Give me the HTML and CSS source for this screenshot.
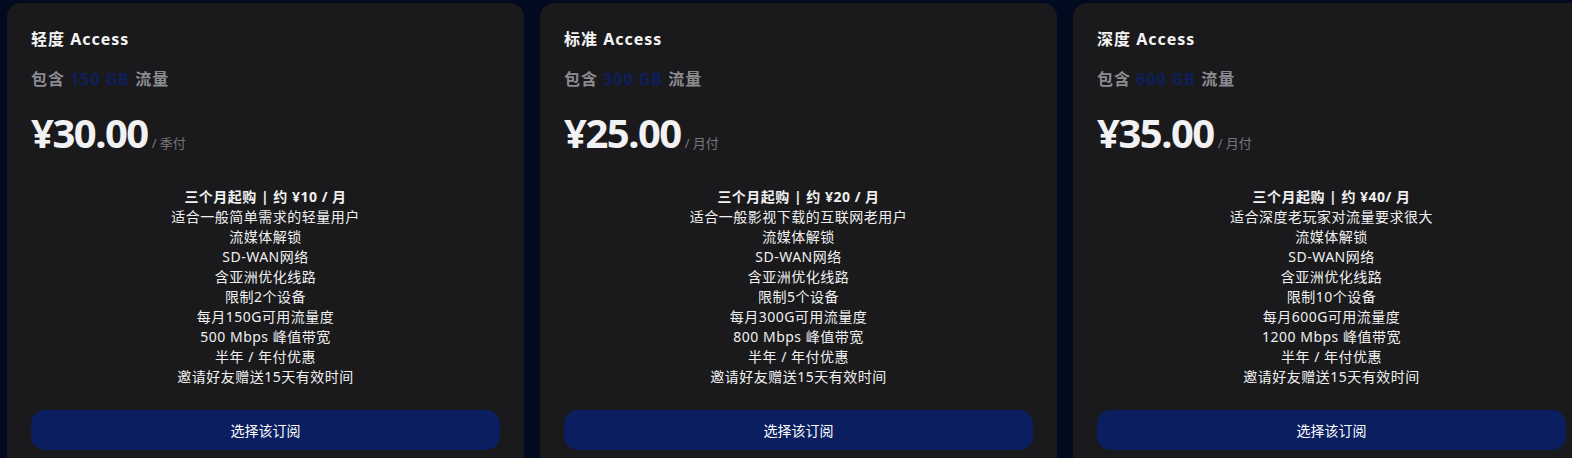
FILE: index.html
```html
<!DOCTYPE html>
<html lang="zh-CN">
<head>
    <meta charset="UTF-8">
    <meta name="viewport" content="width=device-width, initial-scale=1.0">
    <title>订阅套餐</title>
    <link rel="stylesheet" href="styles.css">
</head>
<body>
    <div class="plans">
        <div class="plan">
            <h2 class="plan-title">轻度 Access</h2>
            <p class="plan-traffic">包含 <span class="traffic-amount">150 GB</span> 流量</p>
            <div class="plan-price"><span class="price">¥30.00</span><span class="period">/ 季付</span></div>
            <ul class="features">
                <li class="lead">三个月起购 | 约 ¥10 / 月</li>
                <li>适合一般简单需求的轻量用户</li>
                <li>流媒体解锁</li>
                <li>SD-WAN网络</li>
                <li>含亚洲优化线路</li>
                <li>限制2个设备</li>
                <li>每月150G可用流量度</li>
                <li>500 Mbps 峰值带宽</li>
                <li>半年 / 年付优惠</li>
                <li>邀请好友赠送15天有效时间</li>
            </ul>
            <button class="select-btn">选择该订阅</button>
        </div>

        <div class="plan">
            <h2 class="plan-title">标准 Access</h2>
            <p class="plan-traffic">包含 <span class="traffic-amount">300 GB</span> 流量</p>
            <div class="plan-price"><span class="price">¥25.00</span><span class="period">/ 月付</span></div>
            <ul class="features">
                <li class="lead">三个月起购 | 约 ¥20 / 月</li>
                <li>适合一般影视下载的互联网老用户</li>
                <li>流媒体解锁</li>
                <li>SD-WAN网络</li>
                <li>含亚洲优化线路</li>
                <li>限制5个设备</li>
                <li>每月300G可用流量度</li>
                <li>800 Mbps 峰值带宽</li>
                <li>半年 / 年付优惠</li>
                <li>邀请好友赠送15天有效时间</li>
            </ul>
            <button class="select-btn">选择该订阅</button>
        </div>

        <div class="plan">
            <h2 class="plan-title">深度 Access</h2>
            <p class="plan-traffic">包含 <span class="traffic-amount">600 GB</span> 流量</p>
            <div class="plan-price"><span class="price">¥35.00</span><span class="period">/ 月付</span></div>
            <ul class="features">
                <li class="lead">三个月起购 | 约 ¥40/ 月</li>
                <li>适合深度老玩家对流量要求很大</li>
                <li>流媒体解锁</li>
                <li>SD-WAN网络</li>
                <li>含亚洲优化线路</li>
                <li>限制10个设备</li>
                <li>每月600G可用流量度</li>
                <li>1200 Mbps 峰值带宽</li>
                <li>半年 / 年付优惠</li>
                <li>邀请好友赠送15天有效时间</li>
            </ul>
            <button class="select-btn">选择该订阅</button>
        </div>
    </div>
</body>
</html>
```

FILE: styles.css
```css
body {
    margin: 0;
    padding: 0;
    background-color: #010a1f;
    font-family: 'Noto Sans', 'Noto Sans CJK SC', sans-serif;
    color: #f2f2f2;
    overflow: hidden;
}

.plans {
    display: flex;
    gap: 16px;
    padding: 3px 0 0 7px;
    width: 1700px;
}

.plan {
    flex: 0 0 517px;
    box-sizing: border-box;
    background-color: #1a1a1c;
    border-radius: 14px;
    padding: 24px 24px 30px;
}

.plan-title {
    margin: 0;
    font-size: 16px;
    line-height: 24px;
    font-weight: 700;
    letter-spacing: 1px;
    color: #f4f4f4;
}

.plan-traffic {
    margin: 16px 0 0;
    font-size: 16px;
    line-height: 24px;
    font-weight: 700;
    letter-spacing: 1px;
    color: #8c8c90;
}

.traffic-amount {
    color: #0d1f5e;
}

.plan-price {
    margin-top: 18px;
    display: flex;
    align-items: baseline;
    gap: 4px;
    height: 48px;
}

.price {
    font-size: 40px;
    line-height: 48px;
    font-weight: 700;
    color: #f2f2f4;
    letter-spacing: -1.5px;
}

.period {
    font-size: 13px;
    color: #77777b;
}

.features {
    list-style: none;
    margin: 30px 0 0;
    padding: 0;
    text-align: center;
    font-size: 14px;
    line-height: 20px;
    letter-spacing: 0.5px;
    color: #f0f0f0;
}

.features .lead {
    font-weight: 700;
}

.select-btn {
    display: block;
    width: 100%;
    height: 40px;
    margin-top: 23px;
    border: none;
    border-radius: 14px;
    background-color: #0b1e5f;
    color: #ffffff;
    font-family: 'Noto Sans', 'Noto Sans CJK SC', sans-serif;
    font-size: 14px;
    cursor: pointer;
}
```
